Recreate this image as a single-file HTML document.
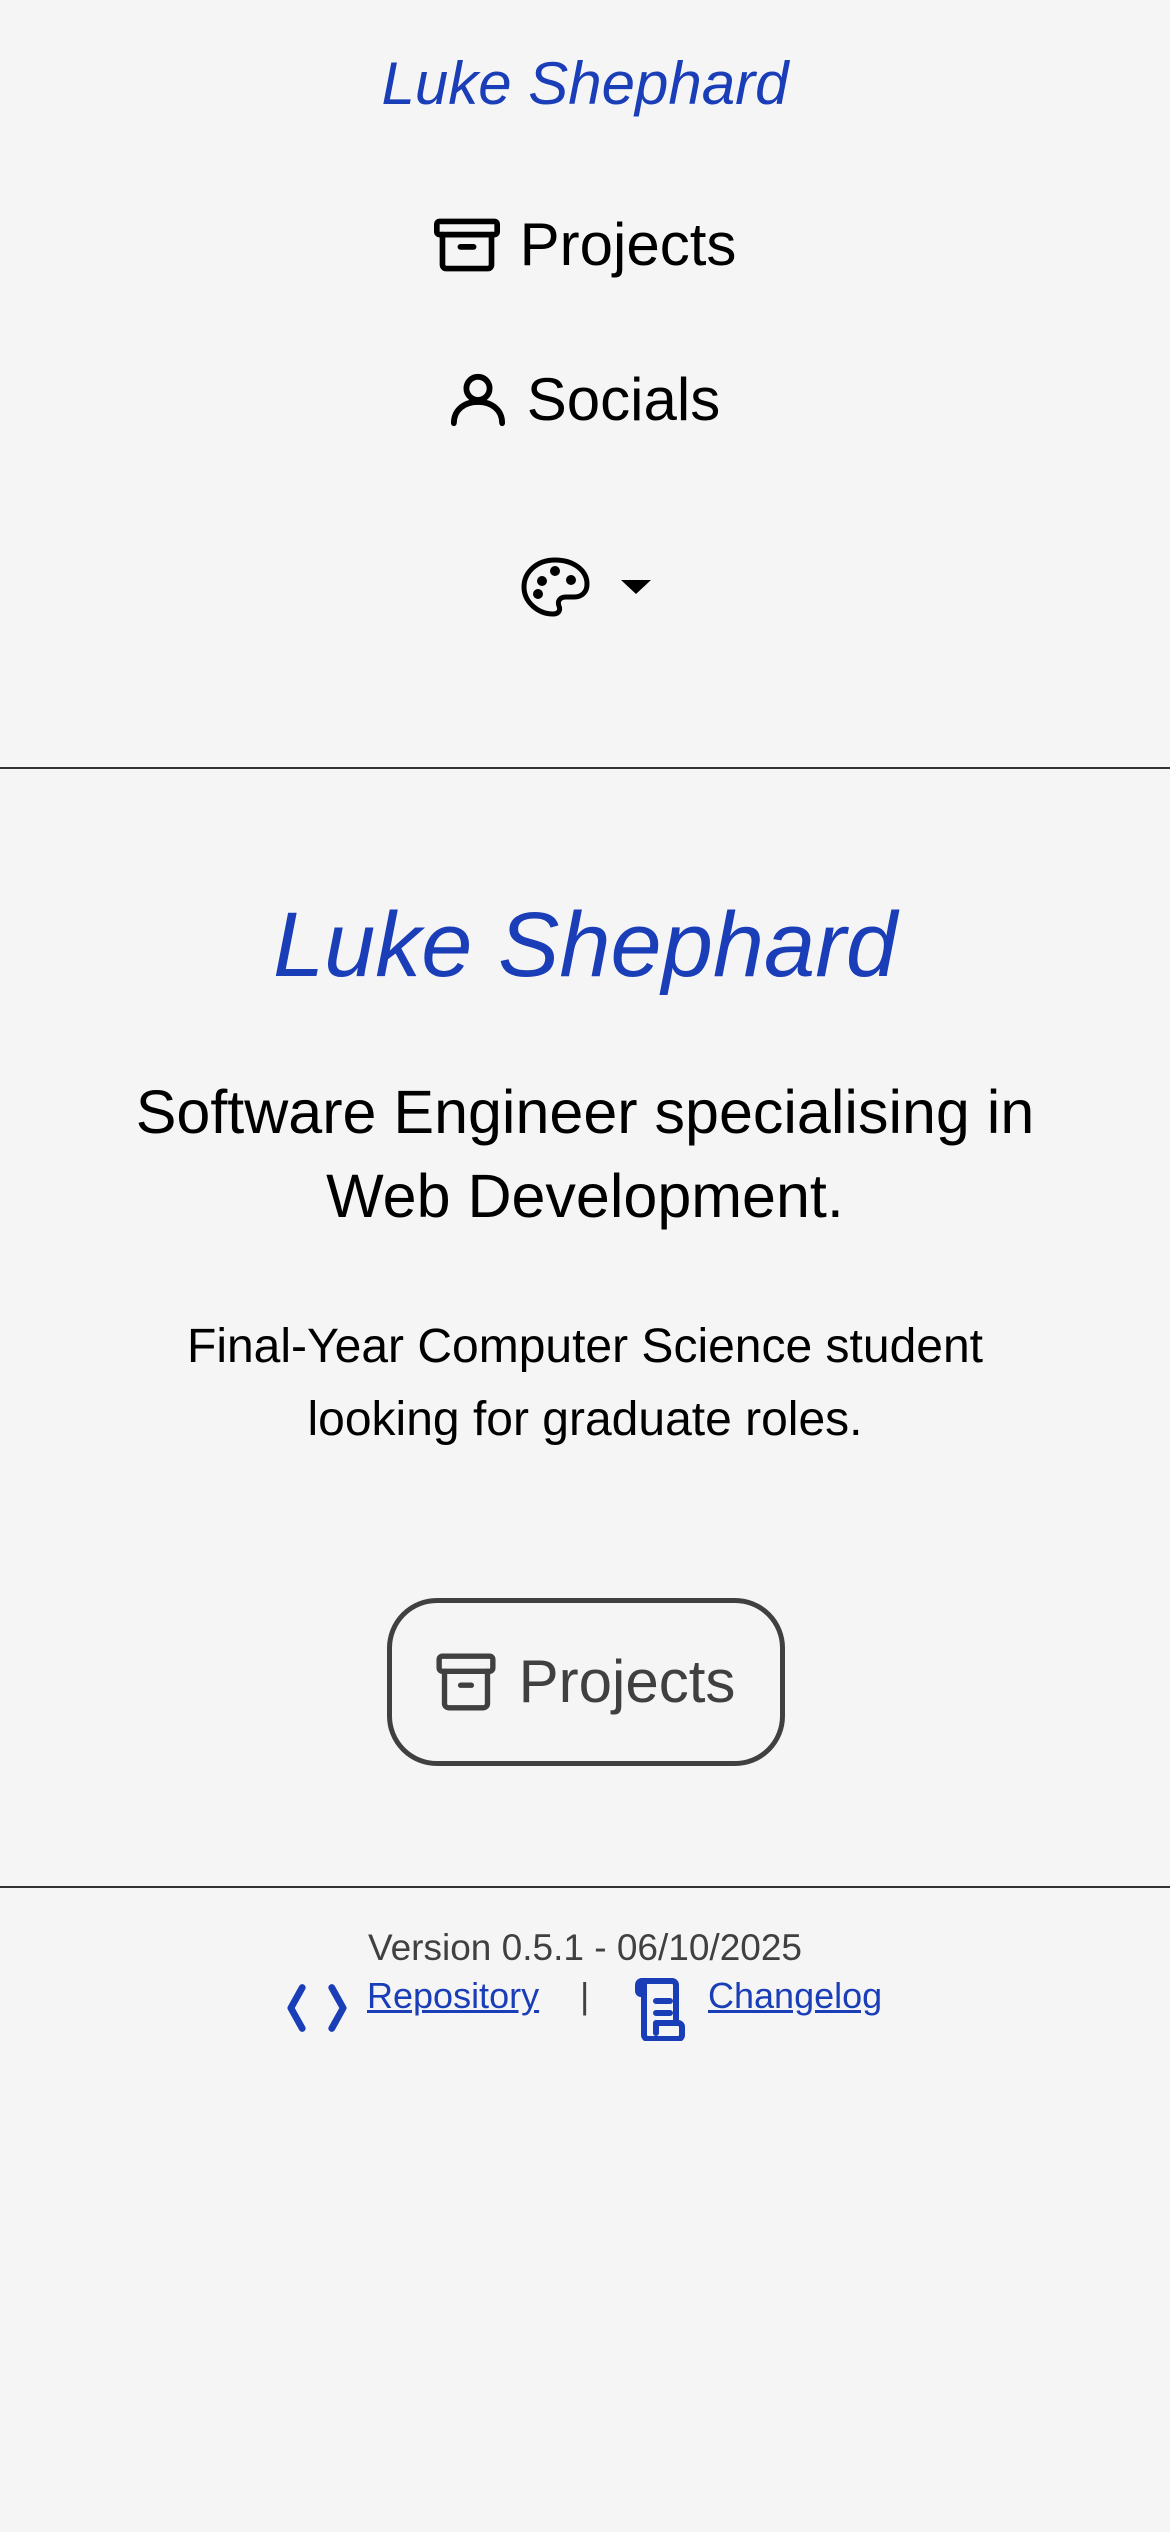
<!DOCTYPE html>
<html><head><meta charset="utf-8"><style>
html,body{margin:0;padding:0;background:#f5f5f5;width:1170px;height:2532px;overflow:hidden;font-family:"Liberation Sans",sans-serif;color:#000}
.abs{position:absolute}
.cur{font-family:"Liberation Sans",sans-serif;font-style:italic;color:#1a3db8;white-space:nowrap}
.c{left:0;width:1170px;text-align:center}
a{color:#1a3db8;text-decoration:underline}
.row{position:absolute;left:0;width:1170px;display:flex;justify-content:center;align-items:center;white-space:nowrap}
</style></head><body>
<div class="abs cur c" style="top:49px;font-size:60px;line-height:70px">Luke Shephard</div>

<div class="row" style="top:210px;height:70px">
<svg width="66" height="58" viewBox="0 0 70 56" fill="none" stroke="#000" stroke-width="6" stroke-linejoin="round" stroke-linecap="round" style="margin-right:20px"><rect x="3" y="3" width="64" height="14" rx="3"/><path d="M9 17v32a4 4 0 0 0 4 4h44a4 4 0 0 0 4-4V17"/><path d="M28 30h14"/></svg>
<span style="font-size:60px;line-height:70px">Projects</span></div>

<div class="row" style="top:365px;height:70px">
<svg width="56" height="60" viewBox="0 0 58 56" fill="none" stroke="#000" stroke-width="6" stroke-linecap="round" style="margin-right:21px"><circle cx="29" cy="16" r="12"/><path d="M4 52c0-14 11-22 25-22s25 8 25 22"/></svg>
<span style="font-size:60px;line-height:70px">Socials</span></div>

<svg class="abs" style="left:520px;top:555px" width="70" height="64" viewBox="0 0 70 62" fill="none" stroke="#000" stroke-width="5"><path d="M35 4C17 4 4 16 4 31c0 15 14 27 29 27 5 0 8-3 6-8-2-5 1-9 7-9h8c8 0 13-5 13-13C67 14 53 4 35 4z"/><circle cx="22" cy="25" r="2.5" fill="#000"/><circle cx="35" cy="15" r="2.5" fill="#000"/><circle cx="18" cy="38" r="2.5" fill="#000"/><circle cx="51" cy="24" r="2.5" fill="#000"/></svg>
<svg class="abs" style="left:621px;top:580px" width="30" height="14"><path d="M0 0h30L15 14z" fill="#000"/></svg>

<div class="abs" style="left:0;top:767px;width:1170px;height:2px;background:#333"></div>

<div class="abs cur c" style="top:889px;font-size:92px;line-height:112px">Luke Shephard</div>
<div class="abs c" style="top:1070px;font-size:61px;line-height:84px">Software Engineer specialising in<br>Web Development.</div>
<div class="abs c" style="top:1310px;font-size:48px;line-height:73px">Final-Year Computer Science student<br>looking for graduate roles.</div>

<div class="abs" style="left:387px;top:1598px;width:388px;height:158px;border:5px solid #404040;border-radius:50px"></div>
<div class="row" style="top:1647px;height:70px">
<svg width="62" height="58" viewBox="0 0 56 54" fill="none" stroke="#404040" stroke-width="5" stroke-linejoin="round" stroke-linecap="round" style="margin-right:22px"><rect x="3" y="3" width="50" height="14" rx="3"/><path d="M8 17v30a4 4 0 0 0 4 4h32a4 4 0 0 0 4-4V17"/><path d="M23 30h10"/></svg>
<span style="font-size:60px;line-height:70px;color:#404040">Projects</span></div>

<div class="abs" style="left:0;top:1886px;width:1170px;height:2px;background:#333"></div>

<div class="abs c" style="top:1926px;font-size:37px;line-height:44px;color:#404040">Version 0.5.1 - 06/10/2025</div>
<svg class="abs" style="left:282px;top:1983px" width="70" height="50" viewBox="0 0 54 44" fill="none" stroke="#1a3db8" stroke-width="6" stroke-linecap="round" stroke-linejoin="round"><path d="M14 4L4 22l10 18"/><path d="M40 4l10 18-10 18"/></svg>
<a class="abs" style="left:367px;top:1974px;font-size:36px;line-height:44px">Repository</a>
<div class="abs" style="left:580px;top:1974px;font-size:36px;line-height:44px;color:#404040">|</div>
<svg class="abs" style="left:624px;top:1977px" width="72" height="64" viewBox="0 0 56 64" fill="none" stroke="#1a3db8" stroke-width="6" stroke-linejoin="round" stroke-linecap="round"><path d="M10 4h30a4 4 0 0 1 4 4v38"/><path d="M10 4a4 4 0 0 0-4 4v6a3 3 0 0 0 6 0V4"/><path d="M12 14v44a4 4 0 0 0 4 4h30a4 4 0 0 0 4-4v-8a4 4 0 0 0-4-4H24v10"/><path d="M24 24h14M24 36h14"/></svg>
<a class="abs" style="left:708px;top:1974px;font-size:36px;line-height:44px">Changelog</a>
</body></html>
